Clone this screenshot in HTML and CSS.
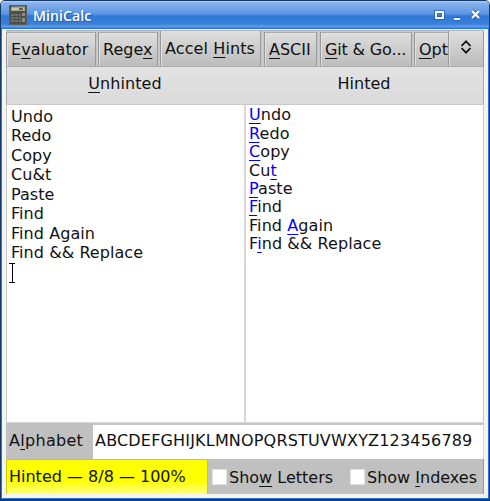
FILE: index.html
```html
<!DOCTYPE html>
<html lang="en">
<head>
<meta charset="utf-8">
<title>MiniCalc</title>
<link rel="stylesheet" href="styles.css">
</head>
<body>
<div class="window">
  <header class="titlebar">
    <svg class="app-icon" width="18" height="21" viewBox="0 0 18 21" shape-rendering="crispEdges">
      <rect x="0.5" y="0.5" width="17" height="19" fill="#4c4e4b" stroke="#54605b"/>
      <path d="M2 2h14l-1-1H3z" fill="#77796f"/>
      <rect x="2" y="2" width="14" height="4" fill="#a3a58b"/>
      <rect x="3" y="3" width="12" height="2" fill="#c5c8a8"/>
      <rect x="10" y="3" width="4" height="2" fill="#5c6150"/>
      <path d="M2 9h3v2H2zM6 9h3v2H6zM10 9h2v2h-2zM2 12h3v2H2zM6 12h3v2H6zM10 12h2v2h-2zM2 15h3v2H2zM6 15h3v2H6zM10 15h2v2h-2z" fill="#71736e"/>
      <path d="M13 8h3v3h-3zM13 13h3v4h-3z" fill="#8c8e88"/>
    </svg>
    <h1 class="title">MiniCalc</h1>
    <svg class="controls" width="48" height="14" viewBox="0 0 48 14">
      <g fill="none" stroke="#174b96" stroke-width="4" opacity=".5"><path d="M2 4h7v6H2zM20 11h6M38 3l7 7M45 3l-7 7"/></g>
      <path d="M2 4h7v6H2z" fill="none" stroke="#fff" stroke-width="2"/>
      <path d="M20 11h6M38 3l7 7M45 3l-7 7" stroke="#fff" stroke-width="2.200"/>
    </svg>
  </header>
  <main class="content">
    <nav class="tabs">
      <button class="tab evaluator">E<u>v</u>aluator</button>
      <button class="tab regex">Rege<u>x</u></button>
      <button class="tab hints active">Accel <u>H</u>ints</button>
      <button class="tab ascii"><u>A</u>SCII</button>
      <button class="tab git"><u>G</u>it &amp; Go...</button>
      <button class="tab options"><u>O</u>pt</button>
      <button class="scroller" aria-label="More tabs">
        <svg width="12" height="16" viewBox="0 0 12 16"><path d="M1.500 7L6 2.300l4.500 4.700M1.500 9L6 13.700l4.500-4.700" fill="none" stroke="#111" stroke-width="1.800"/></svg>
      </button>
    </nav>
    <div class="headings"><h2><u>U</u>nhinted</h2><h2>Hinted</h2></div>
    <div class="panes">
      <div class="pane unhinted">
        <p>Undo</p><p>Redo</p><p>Copy</p><p>Cu&amp;t</p><p>Paste</p><p>Find</p><p>Find Again</p><p>Find &amp;&amp; Replace</p>
        <svg class="caret" width="6" height="20" viewBox="0 0 6 20" shape-rendering="crispEdges"><path d="M0 .5h6M0 19.500h6M3.500 1v18" stroke="#000" fill="none"/></svg>
      </div>
      <div class="pane hinted">
        <p><u>U</u>ndo</p><p><u>R</u>edo</p><p><u>C</u>opy</p><p>Cu<u>t</u></p><p><u>P</u>aste</p><p><u>F</u>ind</p><p>Find <u>A</u>gain</p><p>F<u>i</u>nd &amp;&amp; Replace</p>
      </div>
    </div>
    <div class="alphabet">
      <label>A<u>l</u>phabet</label>
      <div class="field">ABCDEFGHIJKLMNOPQRSTUVWXYZ123456789</div>
    </div>
    <footer class="status">
      <div class="result">Hinted — 8/8 — 100%</div>
      <label class="check letters"><span class="box"></span><span class="caption">Sho<u>w</u> Letters</span></label>
      <label class="check indexes"><span class="box"></span><span class="caption">Show <u>I</u>ndexes</span></label>
    </footer>
  </main>
</div>
</body>
</html>
```
FILE: styles.css
```css
* { box-sizing: border-box; }
body { margin: 0; background: #fff; font: 16px/19px "DejaVu Sans", sans-serif; color: #111; overflow: hidden; }
h1, h2, p { margin: 0; font-weight: normal; }
u { text-decoration: underline; text-decoration-color: currentColor; text-decoration-thickness: 1px; text-underline-offset: 3px; text-decoration-skip-ink: none; }
.window { width: 490px; height: 501px; display: grid; grid-template-rows: 28px 1fr; border: 1px solid #153968; border-bottom-width: 2px; border-radius: 5px 5px 0 0; background: #f5f4f4; }
.titlebar { display: flex; align-items: center; padding: 0 7px 0 8px; border-radius: 4px 4px 0 0; background: linear-gradient(#b6d2f5 0, #88b2ed 2px, #5995e3 13px, #2f78d6 15px, #3b80da 23px, #66a0ed 26px, #2474e2 27px); }
.app-icon { margin-top: 1px; }
.title { margin: 2px 0 0 6px; font: 600 14.2px/20px "Open Sans", sans-serif; color: #fff; text-shadow: 1px 1px 1px #285a9b; flex: 1; }
.content { border: solid #2975df; border-width: 0 1px 1px; padding: 1px 4px 4px; display: grid; grid-template-rows: 37px 37px 318px 37px 1fr; }
.tabs { display: flex; align-items: flex-end; background: #c9c9c9; border-top: 1px solid #b5b5b5; border-bottom: 1px solid #aaa; overflow: hidden; }
.tab, .scroller { font: inherit; color: inherit; border: 1px solid #999; border-top-color: #aaa; border-bottom: 0; padding: 0 0 0 4px; text-align: left; white-space: nowrap; overflow: hidden; background: linear-gradient(#dedede, #bcbcbc); height: 34px; flex: none; border-radius: 0; box-shadow: inset 1px 1px #e1e1e1; }
.evaluator { width: 90px; margin-right: 2px; letter-spacing: .1px; }
.regex { width: 60px; margin-right: 2px; }
.active { width: 101px; height: 36px; margin-right: 3px; letter-spacing: .1px; }
.ascii { width: 53px; margin-right: 3px; }
.git { width: 92px; margin-right: 2px; letter-spacing: -.15px; }
.options { width: 34px; border-right: 0; }
.scroller { flex: 1; height: 36px; padding: 0 1px 4px 0; display: flex; align-items: center; justify-content: center; }
.headings { display: grid; grid-template-columns: 236px 1fr; text-align: center; padding-top: 7px; border-left: 1px solid #aaa; border-right: 1px solid #aaa; background: linear-gradient(#e2e2e2, #dbdbdb); }
.headings h2 { font-size: 16px; }
.headings h2:first-child { letter-spacing: .1px; }
.headings h2:last-child { padding-left: 2px; }
.panes { display: grid; grid-template-columns: 239px 1fr; border: 1px solid #c8c8c8; border-bottom: 0; }
.pane { background: #fff; }
.unhinted { border-right: 2px solid #d8d8d8; padding: 2px 0 0 4px; line-height: 19.430px; letter-spacing: .06px; }
.caret { display: block; margin-left: -2px; }
.hinted { padding: 1.200px 0 0 3px; line-height: 18.450px; letter-spacing: .08px; }
.hinted u { color: #00f; }
.alphabet { display: grid; grid-template-columns: 87px 1fr; background: #c0c0c0; border-top: 1px solid #d8d8d8; }
.alphabet label { padding: 8px 0 0 3px; letter-spacing: .3px; }
.field { background: #fff; border-top: 2px solid #c5c5c5; border-right: 1px solid #d8d8d8; padding: 6px 0 0 2px; white-space: nowrap; letter-spacing: .18px; }
.status { display: flex; align-items: center; background: #c0c0c0; border-right: 1px solid #999; }
.result { width: 202px; height: 100%; padding: 7px 0 0 2px; border: solid #cccc00; border-width: 1px 1px 0; background: linear-gradient(#ff0 60%, #ffff80); white-space: nowrap; }
.check { display: flex; align-items: center; gap: 3px; white-space: nowrap; }
.caption { padding-top: 2px; }
.letters { margin-left: 4px; width: 138px; }
.letters, .indexes { gap: 2px; }
.box { width: 15px; height: 16px; background: #fff; border: 1px solid #e1e1e1; flex: none; }
```
